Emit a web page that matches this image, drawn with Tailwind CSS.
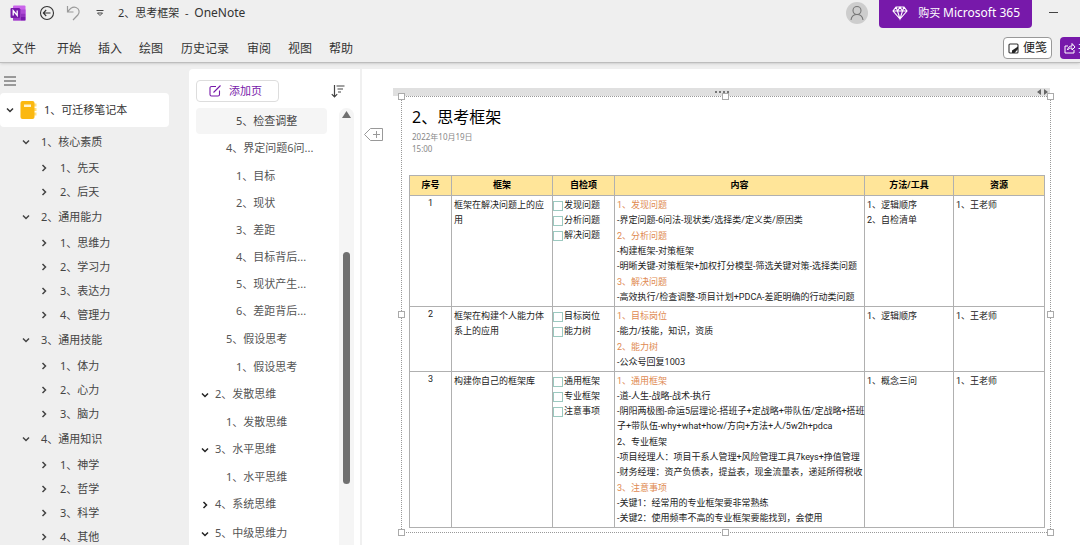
<!DOCTYPE html>
<html lang="zh-CN">
<head>
<meta charset="utf-8">
<title>2、思考框架 - OneNote</title>
<script src="https://cdn.jsdelivr.net/npm/@tailwindcss/browser@4"></script>
</head>
<body class="bg-[#efefef] font-['Noto_Sans','Noto_Sans_CJK_SC',sans-serif] text-[#333]">
<svg class="hidden">
  <symbol id="down" viewBox="0 0 8 8"><path d="M1 2.5 4 5.5 7 2.5" fill="none" stroke="currentColor" stroke-width="1.5"/></symbol>
  <symbol id="right" viewBox="0 0 8 8"><path d="M2.5 1 5.5 4 2.5 7" fill="none" stroke="currentColor" stroke-width="1.5"/></symbol>
</svg>
<div class="flex h-screen flex-col overflow-hidden">

  <header class="relative z-10 shrink-0 border-b border-[#bdbdbd] bg-[#efefef] shadow-sm">
    <div class="flex h-[28px] items-start">
      <div class="flex h-[26px] items-center pl-[10px]">
        <svg class="h-4 w-4" viewBox="0 0 16 16"><rect x="3" y="0.500" width="12.500" height="15" rx="1" fill="#ca64ea"/><rect x="11" y="4.500" width="4.500" height="4" fill="#ae4bd5"/><rect x="11" y="8.500" width="4.500" height="3.500" fill="#9332bf"/><rect x="11" y="12" width="4.500" height="3.500" fill="#7719aa"/><rect x="3" y="4" width="8" height="11.500" fill="#9a3cc4"/><rect x="0.500" y="3" width="9.500" height="10" rx="1" fill="#7719aa"/><path d="M3.200 10.500v-5l4 5v-5" fill="none" stroke="#fff" stroke-width="1.300"/></svg>
        <button aria-label="返回" class="ml-[13px]"><svg class="h-4 w-4" viewBox="0 0 16 16" fill="none" stroke="#333" stroke-width="1.100"><circle cx="8" cy="8" r="6.500"/><path d="M11.500 8h-7M7.200 5 4.300 8l2.900 3"/></svg></button>
        <button aria-label="撤消" class="ml-[11px]"><svg class="h-4 w-4" viewBox="0 0 16 16" fill="none" stroke="#9a9a9a" stroke-width="1.200"><path d="M1.500 1v6h6M1.800 6.700C4 3.500 7 1.500 10 2.500c3.500 1.200 4 5 1.800 7.500L7 15"/></svg></button>
        <button aria-label="自定义快速访问工具栏" class="ml-[14px]"><svg class="h-2 w-2" viewBox="0 0 8 8"><path d="M0.500 1.500h7" stroke="#444" fill="none"/><path d="M1.500 4h5L4 6.500z" fill="#fff" stroke="#444"/></svg></button>
        <h1 class="ml-[14px] text-[11px] whitespace-nowrap">2、思考框架&nbsp; -&nbsp; <span class="text-xs">OneNote</span></h1>
      </div>
      <div class="ml-auto flex items-start">
        <button aria-label="账户" class="mt-[2px] mr-[11px] rounded-full bg-[#cdcdcd]"><svg class="h-[22px] w-[22px]" viewBox="0 0 22 22" fill="none" stroke="#777" stroke-width="1.100"><circle cx="11" cy="8.500" r="4"/><path d="M5 18c.5-3.500 3-5.500 6-5.500s5.500 2 6 5.500"/></svg></button>
        <button class="flex h-[28px] items-center rounded-b bg-[#7719aa] pr-3 pb-[2px] pl-[13px] text-[11px] whitespace-nowrap text-white"><svg class="mr-[10px] h-4 w-4" viewBox="0 0 16 16" fill="none" stroke="#fff" stroke-width="1.100"><path d="M4 2h8l3 4-7 8L1 6zM1 6h14M5.500 6 8 14l2.500-8L8 2 5.500 6 4 2M12 2l-1.500 4"/></svg>购买&nbsp;<span class="text-xs">Microsoft 365</span></button>
        <button aria-label="最小化" class="flex h-[25px] w-[48px] items-center pl-[17px]"><span class="h-px w-[9px] bg-[#444]"></span></button>
      </div>
    </div>
    <div class="flex h-[34px] items-center text-xs whitespace-nowrap">
      <nav class="flex items-center gap-[17px] pl-3 pt-[7px]">
        <button>文件</button><button class="ml-1">开始</button><button>插入</button><button>绘图</button><button class="mx-px">历史记录</button><button>审阅</button><button>视图</button><button>帮助</button>
      </nav>
      <div class="ml-auto flex pt-[6px]">
        <button class="mr-2 flex h-[22px] items-center rounded border border-[#999] bg-white px-1 text-[#222]"><svg class="mr-1 h-[11px] w-[11px]" viewBox="0 0 11 11"><rect x="1" y="1" width="9" height="9" rx="1" fill="none" stroke="#333" stroke-width="1.100"/><path d="M10 3.500V6L6.500 10H4V7.500z" fill="#222"/></svg>便笺</button>
        <button aria-label="共享" class="flex h-[22px] w-5 items-center overflow-hidden rounded-l bg-[#7719aa] pl-1 text-white"><svg class="mr-[2px] h-3 w-3 shrink-0" viewBox="0 0 12 12" fill="none" stroke="#fff"><path d="M4 4H1v7h9V8M3.500 8C4 5.500 5.500 4 8 4V1.500L11 5 8 8V6C6 6 4.500 6.500 3.500 8z"/></svg>共享</button>
      </div>
    </div>
  </header>

  <div class="flex min-h-0 flex-1">
    <aside class="w-[189px] shrink-0 overflow-hidden pt-[13px] text-[11px] whitespace-nowrap text-[#444]">
      <button aria-label="导航" class="ml-1 block"><svg class="h-[10px] w-3" viewBox="0 0 12 10"><path d="M0 1h12M0 5h12M0 9h12" stroke="#444"/></svg></button>
      <div class="mt-[7px] mr-5 flex h-[34px] items-center rounded bg-white pl-[6px] text-[#333]">
        <svg class="h-2 w-2"><use href="#down"/></svg>
        <svg class="ml-[6px] h-[18px] w-[17px]" viewBox="0 0 17 18"><path d="M14 2.500h2.500v3H14zM14 7h2.500v3H14zM14 11.500h2.500v3H14z" fill="#ffdf80"/><rect x="0.500" y="0" width="14" height="18" rx="2" fill="#fbb811"/><rect x="4" y="3.500" width="7" height="2.500" fill="#fff3cf"/></svg>
        <span class="ml-[7px]">1、可迁移笔记本</span>
      </div>
      <ul class="pt-[2px]">
        <li><div class="flex h-[26px] items-center gap-[11px] pl-[22px]"><svg class="h-2 w-2"><use href="#down"/></svg>1、核心素质</div>
          <ul class="pt-px">
            <li class="flex h-6 items-center gap-3 pl-10"><svg class="h-2 w-2"><use href="#right"/></svg>1、先天</li>
            <li class="flex h-6 items-center gap-3 pl-10"><svg class="h-2 w-2"><use href="#right"/></svg>2、后天</li>
          </ul></li>
        <li><div class="flex h-[26px] items-center gap-[11px] pl-[22px]"><svg class="h-2 w-2"><use href="#down"/></svg>2、通用能力</div>
          <ul class="pt-px">
            <li class="flex h-6 items-center gap-3 pl-10"><svg class="h-2 w-2"><use href="#right"/></svg>1、思维力</li>
            <li class="flex h-6 items-center gap-3 pl-10"><svg class="h-2 w-2"><use href="#right"/></svg>2、学习力</li>
            <li class="flex h-6 items-center gap-3 pl-10"><svg class="h-2 w-2"><use href="#right"/></svg>3、表达力</li>
            <li class="flex h-6 items-center gap-3 pl-10"><svg class="h-2 w-2"><use href="#right"/></svg>4、管理力</li>
          </ul></li>
        <li><div class="flex h-[26px] items-center gap-[11px] pl-[22px]"><svg class="h-2 w-2"><use href="#down"/></svg>3、通用技能</div>
          <ul class="pt-px">
            <li class="flex h-6 items-center gap-3 pl-10"><svg class="h-2 w-2"><use href="#right"/></svg>1、体力</li>
            <li class="flex h-6 items-center gap-3 pl-10"><svg class="h-2 w-2"><use href="#right"/></svg>2、心力</li>
            <li class="flex h-6 items-center gap-3 pl-10"><svg class="h-2 w-2"><use href="#right"/></svg>3、脑力</li>
          </ul></li>
        <li><div class="flex h-[26px] items-center gap-[11px] pl-[22px]"><svg class="h-2 w-2"><use href="#down"/></svg>4、通用知识</div>
          <ul class="pt-px">
            <li class="flex h-6 items-center gap-3 pl-10"><svg class="h-2 w-2"><use href="#right"/></svg>1、神学</li>
            <li class="flex h-6 items-center gap-3 pl-10"><svg class="h-2 w-2"><use href="#right"/></svg>2、哲学</li>
            <li class="flex h-6 items-center gap-3 pl-10"><svg class="h-2 w-2"><use href="#right"/></svg>3、科学</li>
            <li class="flex h-6 items-center gap-3 pl-10"><svg class="h-2 w-2"><use href="#right"/></svg>4、其他</li>
          </ul></li>
      </ul>
    </aside>

    <section class="mt-[6px] flex w-[171px] shrink-0 flex-col overflow-hidden rounded-tl bg-white text-[11px] whitespace-nowrap text-[#555]">
      <div class="flex items-center pt-[11px] pr-[15px] pl-[7px]">
        <button class="flex h-[22px] w-[83px] items-center rounded border border-[#ddd] pl-3 text-[#7719aa]"><svg class="mr-2 h-3 w-3" viewBox="0 0 12 12" fill="none" stroke="currentColor" stroke-width="1.100"><path d="M7 1.500H2.500a1.500 1.500 0 0 0-1.500 1.500v6.500A1.500 1.500 0 0 0 2.500 11H9a1.500 1.500 0 0 0 1.500-1.500V5.500M4.500 7.500l7-7"/></svg>添加页</button>
        <button aria-label="排序" class="ml-auto"><svg class="h-[14px] w-[14px]" viewBox="0 0 14 14" fill="none" stroke="#444" stroke-width="1.200"><path d="M3.500 1v12M.8 10.200l2.700 2.800 2.700-2.800M5.500 2h8M6.500 5h5.500M7 8h3"/></svg></button>
      </div>
      <div class="flex min-h-0 flex-1 pt-[6px] pl-[7px]">
        <div class="min-w-0 flex-1">
          <div class="mr-3 flex h-[26px] items-center rounded bg-[#f5f5f5] pl-10 text-[#444]">5、检查调整</div>
          <ul class="pt-px">
            <li><div class="flex h-[27px] items-center pl-[30px]">4、界定问题6问...</div>
              <ul class="py-px">
                <li class="flex h-[27px] items-center pl-10">1、目标</li>
                <li class="flex h-[27px] items-center pl-10">2、现状</li>
                <li class="flex h-[27px] items-center pl-10">3、差距</li>
                <li class="flex h-[27px] items-center pl-10">4、目标背后...</li>
                <li class="flex h-[27px] items-center pl-10">5、现状产生...</li>
                <li class="flex h-[27px] items-center pl-10">6、差距背后...</li>
              </ul></li>
            <li><div class="flex h-[27px] items-center pl-[30px]">5、假设思考</div>
              <ul class="pt-px"><li class="flex h-[27px] items-center pl-10">1、假设思考</li></ul></li>
            <li><div class="flex h-[27px] items-center gap-[6px] pl-[5px]"><svg class="h-2 w-2 text-[#222]"><use href="#down"/></svg>2、发散思维</div>
              <ul class="pt-px"><li class="flex h-[27px] items-center pl-[30px]">1、发散思维</li></ul></li>
            <li><div class="flex h-[27px] items-center gap-[6px] pl-[5px]"><svg class="h-2 w-2 text-[#222]"><use href="#down"/></svg>3、水平思维</div>
              <ul class="pt-px"><li class="flex h-[27px] items-center pl-[30px]">1、水平思维</li></ul></li>
            <li class="flex h-[27px] items-center gap-[6px] pl-[5px]"><svg class="h-2 w-2 text-[#222]"><use href="#right"/></svg>4、系统思维</li>
            <li class="mt-[2px] flex h-[27px] items-center gap-[6px] pl-[5px]"><svg class="h-2 w-2 text-[#222]"><use href="#down"/></svg>5、中级思维力</li>
          </ul>
        </div>
        <div class="mr-[6px] flex w-[15px] flex-col items-center rounded-t-lg bg-[#f5f5f5] pt-[3px]">
          <svg class="h-[7px] w-[9px]" viewBox="0 0 9 7"><path d="M4.500 0 9 7H0z" fill="#707070"/></svg>
          <div class="mt-[134px] h-[232px] w-[7px] rounded-full bg-[#707070]"></div>
        </div>
      </div>
    </section>

    <main class="mt-[6px] flex min-w-0 flex-1 items-start border-l-2 border-[#f0f0f0] bg-white">
      <button aria-label="添加空间" class="mt-[59px] ml-[2px] shrink-0"><svg class="h-[13px] w-[19px]" viewBox="0 0 19 13" fill="none" stroke="#999"><path d="M6.500.5h12v12h-12l-6-6zM12.500 3v7M9 6.500h7"/></svg></button>
      <div class="mt-[19px] mr-[30px] ml-[10px] min-w-0 flex-1">
        <div class="relative flex h-2 items-center bg-[#e0e0e0]">
          <svg class="mx-auto h-1 w-4" viewBox="0 0 16 4"><path d="M1 2h14" stroke="#777" stroke-width="2" stroke-dasharray="2 2"/></svg>
          <svg class="absolute right-[2px] h-[6px] w-[11px]" viewBox="0 0 11 6"><path d="M4 0v6L0 3zM7 0v6l4-3z" fill="#666"/></svg>
        </div>
        <article class="relative -mr-px ml-2 border border-dotted border-[#999] pr-[5px] pb-1 pl-[7px] text-[#222]">
          <span class="absolute -top-1 -left-1 h-[7px] w-[7px] border border-[#aaa] bg-white"></span>
          <span class="absolute -top-1 left-1/2 -ml-1 h-[7px] w-[7px] border border-[#aaa] bg-white"></span>
          <span class="absolute -top-1 -right-1 h-[7px] w-[7px] border border-[#aaa] bg-white"></span>
          <span class="absolute top-1/2 -left-1 -mt-1 h-[7px] w-[7px] border border-[#aaa] bg-white"></span>
          <span class="absolute top-1/2 -right-1 -mt-1 h-[7px] w-[7px] border border-[#aaa] bg-white"></span>
          <span class="absolute -bottom-1 -left-1 h-[7px] w-[7px] border border-[#aaa] bg-white"></span>
          <span class="absolute -bottom-1 left-1/2 -ml-1 h-[7px] w-[7px] border border-[#aaa] bg-white"></span>
          <span class="absolute -right-1 -bottom-1 h-[7px] w-[7px] border border-[#aaa] bg-white"></span>
          <h2 class="pt-2 pl-[3px] text-base leading-6 text-black">2、思考框架</h2>
          <p class="pt-[2px] pl-[3px] text-[8px] leading-3 text-[#888]">2022年10月19日<br>15:00</p>
          <table class="mt-5 w-full table-fixed border-collapse font-[Roboto,'Noto_Sans_CJK_SC',sans-serif] text-[9px] leading-[15px]">
            <colgroup><col class="w-[42px]"><col class="w-[101px]"><col class="w-[62px]"><col><col class="w-[89px]"><col class="w-[91px]"></colgroup>
            <thead class="bg-[#ffe599] text-black">
              <tr class="h-5"><th class="border border-[#b0b0b0] p-0">序号</th><th class="border border-[#b0b0b0] p-0">框架</th><th class="border border-[#b0b0b0] p-0">自检项</th><th class="border border-[#b0b0b0] p-0">内容</th><th class="border border-[#b0b0b0] p-0">方法/工具</th><th class="border border-[#b0b0b0] p-0">资源</th></tr>
            </thead>
            <tbody class="align-top">
              <tr>
                <td class="border border-[#b0b0b0] p-0 text-center">1</td>
                <td class="border border-[#b0b0b0] px-[2px] pt-[2px]">框架在解决问题上的应用</td>
                <td class="border border-[#b0b0b0] pt-[2px]">
                  <label class="flex items-center gap-px"><input type="checkbox" class="h-[10px] w-[10px] appearance-none border border-[#9cc9c0] bg-white">发现问题</label>
                  <label class="flex items-center gap-px"><input type="checkbox" class="h-[10px] w-[10px] appearance-none border border-[#9cc9c0] bg-white">分析问题</label>
                  <label class="flex items-center gap-px"><input type="checkbox" class="h-[10px] w-[10px] appearance-none border border-[#9cc9c0] bg-white">解决问题</label>
                </td>
                <td class="border border-[#b0b0b0] pt-[2px] pb-px pl-[2px] whitespace-nowrap">
                  <p class="text-[#e08a52]">1、发现问题</p><p>-界定问题-6问法-现状类/选择类/定义类/原因类</p>
                  <p class="mt-px text-[#e08a52]">2、分析问题</p><p>-构建框架-对策框架</p><p>-明晰关键-对策框架+加权打分模型-筛选关键对策-选择类问题</p>
                  <p class="mt-px text-[#e08a52]">3、解决问题</p><p>-高效执行/检查调整-项目计划+PDCA-差距明确的行动类问题</p>
                </td>
                <td class="border border-[#b0b0b0] px-[2px] pt-[2px]"><p>1、逻辑顺序</p><p>2、自检清单</p></td>
                <td class="border border-[#b0b0b0] px-[2px] pt-[2px]">1、王老师</td>
              </tr>
              <tr>
                <td class="border border-[#b0b0b0] p-0 text-center">2</td>
                <td class="border border-[#b0b0b0] px-[2px] pt-[2px]">框架在构建个人能力体系上的应用</td>
                <td class="border border-[#b0b0b0] pt-[2px]">
                  <label class="flex items-center gap-px"><input type="checkbox" class="h-[10px] w-[10px] appearance-none border border-[#9cc9c0] bg-white">目标岗位</label>
                  <label class="flex items-center gap-px"><input type="checkbox" class="h-[10px] w-[10px] appearance-none border border-[#9cc9c0] bg-white">能力树</label>
                </td>
                <td class="border border-[#b0b0b0] pt-[2px] pb-px pl-[2px] whitespace-nowrap">
                  <p class="text-[#e08a52]">1、目标岗位</p><p>-能力/技能，知识，资质</p>
                  <p class="mt-px text-[#e08a52]">2、能力树</p><p>-公众号回复<span class="font-['Noto_Sans'] leading-none">1003</span></p>
                </td>
                <td class="border border-[#b0b0b0] px-[2px] pt-[2px]">1、逻辑顺序</td>
                <td class="border border-[#b0b0b0] px-[2px] pt-[2px]">1、王老师</td>
              </tr>
              <tr>
                <td class="border border-[#b0b0b0] p-0 text-center">3</td>
                <td class="border border-[#b0b0b0] px-[2px] pt-[2px]">构建你自己的框架库</td>
                <td class="border border-[#b0b0b0] pt-[2px]">
                  <label class="flex items-center gap-px"><input type="checkbox" class="h-[10px] w-[10px] appearance-none border border-[#9cc9c0] bg-white">通用框架</label>
                  <label class="flex items-center gap-px"><input type="checkbox" class="h-[10px] w-[10px] appearance-none border border-[#9cc9c0] bg-white">专业框架</label>
                  <label class="flex items-center gap-px"><input type="checkbox" class="h-[10px] w-[10px] appearance-none border border-[#9cc9c0] bg-white">注意事项</label>
                </td>
                <td class="border border-[#b0b0b0] pt-[2px] pb-px pl-[2px] whitespace-nowrap">
                  <p class="text-[#e08a52]">1、通用框架</p><p>-道-人生-战略-战术-执行</p><p>-阴阳两极图-命运5层理论-搭班子+定战略+带队伍/定战略+搭班<br>子+带队伍-why+what+how/方向+方法+人/5w2h+pdca</p>
                  <p class="mt-px">2、专业框架</p><p>-项目经理人：项目干系人管理+风险管理工具7keys+挣值管理</p><p>-财务经理：资产负债表，提益表，现金流量表，递延所得税收</p>
                  <p class="mt-px text-[#e08a52]">3、注意事项</p><p>-关键1：经常用的专业框架要非常熟练</p><p>-关键2：使用频率不高的专业框架要能找到，会使用</p>
                </td>
                <td class="border border-[#b0b0b0] px-[2px] pt-[2px]">1、概念三问</td>
                <td class="border border-[#b0b0b0] px-[2px] pt-[2px]">1、王老师</td>
              </tr>
            </tbody>
          </table>
        </article>
      </div>
    </main>
  </div>
</div>
</body>
</html>
